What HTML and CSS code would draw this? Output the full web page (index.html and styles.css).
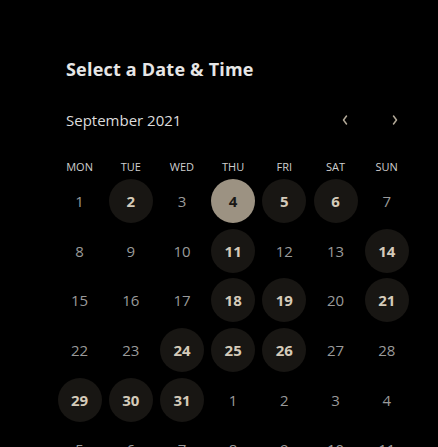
FILE: index.html
```html
<!DOCTYPE html>
<html>
<head>
<meta charset="utf-8">
<link rel="stylesheet" href="styles.css">
</head>
<body>
<div class="picker">
  <h1 class="title">Select a Date &amp; Time</h1>
  <div class="month-row">
    <span class="month">September 2021</span>
    <div class="nav">
      <button class="nav-btn" aria-label="Previous month">
        <svg width="8" height="12" viewBox="0 0 8 12"><path d="M5.5 2 L2.5 6 L5.5 10" fill="none" stroke="currentColor" stroke-width="1.5" stroke-linecap="round" stroke-linejoin="round"/></svg>
      </button>
      <button class="nav-btn" aria-label="Next month">
        <svg width="8" height="12" viewBox="0 0 8 12"><path d="M2.5 2 L5.5 6 L2.5 10" fill="none" stroke="currentColor" stroke-width="1.5" stroke-linecap="round" stroke-linejoin="round"/></svg>
      </button>
    </div>
  </div>
  <div class="grid">
    <div class="dow">MON</div><div class="dow">TUE</div><div class="dow">WED</div><div class="dow">THU</div><div class="dow">FRI</div><div class="dow">SAT</div><div class="dow">SUN</div>

    <div class="day"><span>1</span></div>
    <div class="day avail"><span>2</span></div>
    <div class="day"><span>3</span></div>
    <div class="day selected"><span>4</span></div>
    <div class="day avail"><span>5</span></div>
    <div class="day avail"><span>6</span></div>
    <div class="day"><span>7</span></div>

    <div class="day"><span>8</span></div>
    <div class="day"><span>9</span></div>
    <div class="day"><span>10</span></div>
    <div class="day avail"><span>11</span></div>
    <div class="day"><span>12</span></div>
    <div class="day"><span>13</span></div>
    <div class="day avail"><span>14</span></div>

    <div class="day"><span>15</span></div>
    <div class="day"><span>16</span></div>
    <div class="day"><span>17</span></div>
    <div class="day avail"><span>18</span></div>
    <div class="day avail"><span>19</span></div>
    <div class="day"><span>20</span></div>
    <div class="day avail"><span>21</span></div>

    <div class="day"><span>22</span></div>
    <div class="day"><span>23</span></div>
    <div class="day avail"><span>24</span></div>
    <div class="day avail"><span>25</span></div>
    <div class="day avail"><span>26</span></div>
    <div class="day"><span>27</span></div>
    <div class="day"><span>28</span></div>

    <div class="day avail"><span>29</span></div>
    <div class="day avail"><span>30</span></div>
    <div class="day avail"><span>31</span></div>
    <div class="day"><span>1</span></div>
    <div class="day"><span>2</span></div>
    <div class="day"><span>3</span></div>
    <div class="day"><span>4</span></div>

    <div class="day"><span>5</span></div>
    <div class="day"><span>6</span></div>
    <div class="day"><span>7</span></div>
    <div class="day"><span>8</span></div>
    <div class="day"><span>9</span></div>
    <div class="day"><span>10</span></div>
    <div class="day"><span>11</span></div>
  </div>
</div>
</body>
</html>
```

FILE: styles.css
```css
html, body {
  margin: 0;
  padding: 0;
  background: #000;
}
body {
  font-family: "Open Sans", "Lato", sans-serif;
  color: #ddd;
}
.picker {
  padding: 59px 26px 0 54px;
  width: 358px;
}
.title {
  margin: 0 0 0 12px;
  font-size: 18px;
  line-height: 20px;
  font-weight: 700;
  color: #e6e6e6;
  letter-spacing: 0.2px;
}
.month-row {
  margin: 31px 0 0 12px;
  height: 20px;
  display: flex;
  align-items: center;
  justify-content: space-between;
}
.month {
  font-size: 15px;
  color: #dcdcdc;
}
.nav {
  display: flex;
  gap: 34px;
  margin-right: 9px;
}
.nav-btn {
  width: 16px;
  height: 20px;
  padding: 0;
  border: 0;
  background: transparent;
  color: #b3a998;
  display: flex;
  align-items: center;
  justify-content: center;
}
.grid {
  margin-top: 26px;
  display: grid;
  grid-template-columns: repeat(7, 51.2px);
  grid-auto-rows: 49.7px;
  grid-template-rows: 20px;
}
.dow {
  display: flex;
  align-items: center;
  justify-content: center;
  font-size: 11px;
  color: #cfcfcf;
}
.day {
  display: flex;
  align-items: center;
  justify-content: center;
}
.day span {
  width: 44px;
  height: 44px;
  border-radius: 50%;
  display: flex;
  align-items: center;
  justify-content: center;
  font-size: 15px;
  color: #9a9a9a;
}
.day.avail span {
  background: #181613;
  color: #d4cab9;
  font-weight: 700;
}
.day.selected span {
  background: #9c9282;
  color: #1a1816;
  font-weight: 700;
}
```
